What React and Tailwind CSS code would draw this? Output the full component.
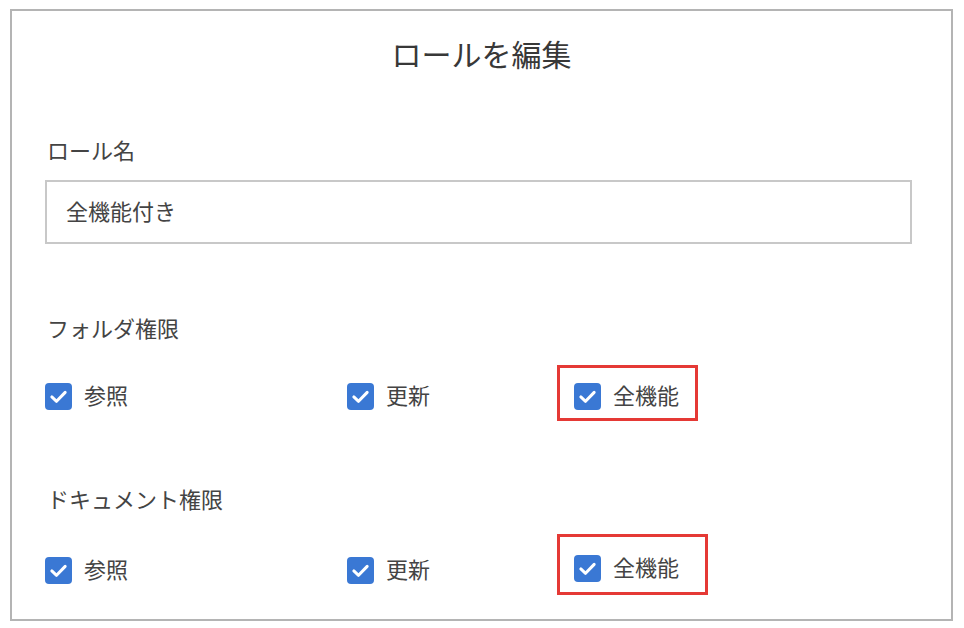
import React from 'react';

const font = { fontFamily: '"Noto Sans CJK JP", "Noto Sans", sans-serif' };

const Check = ({ label }) => (
  <div className="flex items-center gap-[12px]">
    <div className="w-[27px] h-[27px] rounded-[4px] bg-[#3a78d4] flex items-center justify-center">
      <svg width="23" height="23" viewBox="0 0 20 20" fill="none">
        <path d="M4.2 10.4 L8.3 14.2 L15.8 6.4" stroke="white" strokeWidth="2.6" strokeLinecap="round" strokeLinejoin="round" />
      </svg>
    </div>
    <span className="text-[22px] leading-[30px] text-[#444] -translate-y-[2px]">{label}</span>
  </div>
);

const PermRow = ({ top, boxW, boxPt, boxPb, className }) => (
  <div className={`flex items-start ${className}`}>
    <div className={`w-[302px] ${top}`}>
      <Check label="参照" />
    </div>
    <div className={`w-[210px] ${top}`}>
      <Check label="更新" />
    </div>
    <div className={`border-[3px] border-[#e53935] pl-[14px] ${boxW} ${boxPt} ${boxPb}`}>
      <Check label="全機能" />
    </div>
  </div>
);

export default function App() {
  return (
    <div className="w-full h-[628px] bg-white" style={font}>
      <div className="ml-[10px] pt-[9px]">
        <div className="w-[943px] h-[612px] border-2 border-[#b4b4b4] bg-white">
          <h1 className="mt-[22px] text-center text-[30px] leading-[40px] text-[#383838]">ロールを編集</h1>
          <div className="pl-[33px]">
            <div className="mt-[61px] ml-[2px] text-[22px] leading-[30px] text-[#444]">ロール名</div>
            <div className="mt-[16px] w-[867px] h-[64px] border-2 border-[#c8c8c8] flex items-center px-[19px] pb-[3px] text-[22px] text-[#444]">
              全機能付き
            </div>
            <div className="mt-[68px] ml-[2px] text-[22px] leading-[30px] text-[#444]">フォルダ権限</div>
            <PermRow className="mt-[23px]" top="mt-[16px]" boxW="w-[141px]" boxPt="pt-[13px]" boxPb="pb-[7px]" />
            <div className="mt-[62px] ml-[2px] text-[22px] leading-[30px] text-[#444]">ドキュメント権限</div>
            <PermRow className="mt-[21px]" top="mt-[21px]" boxW="w-[151px]" boxPt="pt-[16px]" boxPb="pb-[9px]" />
          </div>
        </div>
      </div>
    </div>
  );
}
